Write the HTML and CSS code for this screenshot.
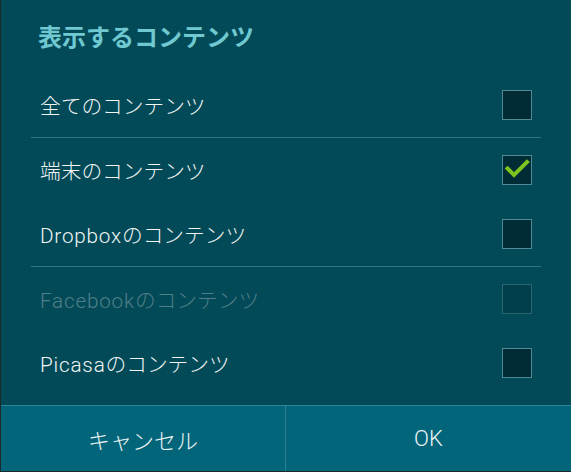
FILE: index.html
```html
<!DOCTYPE html>
<html lang="ja">
<head>
<meta charset="utf-8">
<link rel="stylesheet" href="styles.css">
</head>
<body>
<div class="dialog">
  <div class="title">表示するコンテンツ</div>
  <div class="list">
    <div class="row"><span class="label">全てのコンテンツ</span><span class="box"></span></div>
    <div class="sep"></div>
    <div class="row"><span class="label">端末のコンテンツ</span><span class="box"><svg width="30" height="30" viewBox="0 0 30 30"><path d="M5.5 13.5 L12 20 L25 7" fill="none" stroke="#7cc51e" stroke-width="4" stroke-linecap="square"/></svg></span></div>
    <div class="row"><span class="label"><span class="en">Dropbox</span>のコンテンツ</span><span class="box"></span></div>
    <div class="sep"></div>
    <div class="row disabled"><span class="label"><span class="en">Facebook</span>のコンテンツ</span><span class="box"></span></div>
    <div class="row"><span class="label"><span class="en">Picasa</span>のコンテンツ</span><span class="box"></span></div>
  </div>
  <div class="buttons">
    <div class="btn">キャンセル</div>
    <div class="btn">OK</div>
  </div>
</div>
</body>
</html>
```
FILE: styles.css
```css
html, body {
  margin: 0;
  padding: 0;
  background: #1b2a2a;
}
body {
  width: 571px;
  height: 472px;
  overflow: hidden;
  font-family: Roboto, "Noto Sans CJK JP", sans-serif;
}
.dialog {
  margin-left: 1px;
  width: 570px;
  height: 471px;
  background: #024a57;
  display: flex;
  flex-direction: column;
}
.title {
  height: 73px;
  box-sizing: border-box;
  padding: 20px 0 0 37px;
  font-size: 24px;
  font-weight: bold;
  color: #70c8d1;
  line-height: 32px;
  font-family: "Noto Sans CJK JP", sans-serif;
}
.list {
  display: flex;
  flex-direction: column;
}
.row {
  height: 64px;
  display: flex;
  align-items: center;
  justify-content: space-between;
  padding: 0 39px;
}
.label {
  font-size: 20.7px;
  font-weight: 300;
  color: #f2f6f6;
}
.en {
  letter-spacing: 0.8px;
}
.sep {
  height: 1px;
  margin: 0 30px;
  background: #2f7682;
}
.box {
  width: 28px;
  height: 28px;
  border: 1px solid #4f8a95;
  background: #012c35;
  position: relative;
}
.box svg {
  position: absolute;
  left: -1px;
  top: -1px;
}
.disabled .label {
  color: #4f7f88;
}
.disabled .box {
  background: #023f4b;
  border-color: #2a6571;
}
.buttons {
  margin-top: auto;
  height: 65px;
  border-top: 1px solid #2c8496;
  background: #02657a;
  display: flex;
}
.btn {
  flex: 0 0 284px;
  display: flex;
  align-items: center;
  justify-content: center;
  font-size: 22px;
  font-weight: 300;
  color: #eef4f5;
}
.btn + .btn {
  flex: 1;
  border-left: 1px solid #2c7f90;
}
```
